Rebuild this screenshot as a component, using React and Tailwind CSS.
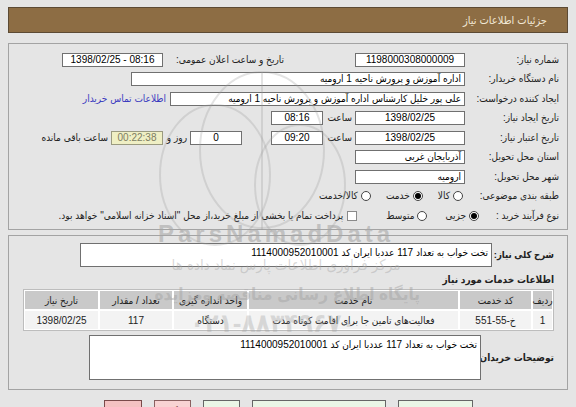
import React from "react";

const FONT = "font-['Liberation_Sans','DejaVu_Sans_Condensed','DejaVu_Sans',sans-serif]";

function Field({ className = "", right = false, ltr = false, children }) {
  return (
    <div
      dir={ltr ? "ltr" : undefined}
      className={`flex h-[14px] shrink-0 items-center overflow-hidden whitespace-nowrap border border-[#707070] bg-white px-[3px] text-[10px] leading-none text-black ${right ? "justify-start" : "justify-center"} ${className}`}
    >
      {children}
    </div>
  );
}

function Label({ className = "w-[92px]", children }) {
  return (
    <div className={`shrink-0 whitespace-nowrap text-[10px] leading-none text-[#222] ${className}`}>
      {children}
    </div>
  );
}

function Radio({ checked }) {
  return (
    <span className="flex h-[10px] w-[10px] shrink-0 items-center justify-center rounded-full border border-[#444] bg-white">
      {checked && <span className="h-[6px] w-[6px] rounded-full bg-black" />}
    </span>
  );
}

function Option({ checked, className = "", children }) {
  return (
    <div className={`flex items-center gap-[3px] ${className}`}>
      <Radio checked={checked} />
      <span className="whitespace-nowrap text-[10px] leading-none text-[#222]">{children}</span>
    </div>
  );
}

const columns = ["ردیف", "کد خدمت", "نام خدمت", "واحد اندازه گیری", "تعداد / مقدار", "تاریخ نیاز"];

export default function App() {
  return (
    <div
      dir="rtl"
      className={`relative h-[407px] w-[576px] overflow-hidden bg-[#e5e5e5] px-[8px] pt-[7px] ${FONT}`}
    >
      {/* header bar */}
      <div className="flex h-[26px] items-center border border-[#5c4a34] bg-[#8d6d44] pr-[20px] text-[11px] text-[#f1e8d6]">
        جزئیات اطلاعات نیاز
      </div>

      {/* main details */}
      <div className="mt-[10px] h-[187px] border border-[#a3a3a3] pr-[8px] pt-[6px]">
        <div className="flex h-[19.5px] items-center">
          <Label>شماره نیاز:</Label>
          <Field className="mr-[2px] w-[110px]">1198000308000009</Field>
          <Label className="mr-[71px] w-[121px]">تاریخ و ساعت اعلان عمومی:</Label>
          <Field ltr className="w-[101px]">1398/02/25 - 08:16</Field>
        </div>

        <div className="flex h-[19.5px] items-center">
          <Label>نام دستگاه خریدار:</Label>
          <Field right className="mr-[2px] w-[334px]">اداره آموزش و پرورش ناحیه 1 ارومیه</Field>
        </div>

        <div className="flex h-[19.5px] items-center">
          <Label>ایجاد کننده درخواست:</Label>
          <Field right className="mr-[2px] w-[295px]">علی پور خلیل کارشناس اداره آموزش و پرورش ناحیه 1 ارومیه</Field>
          <span className="mr-[4px] whitespace-nowrap text-[10px] leading-none text-[#3a3abf]">اطلاعات تماس خریدار</span>
        </div>

        <div className="flex h-[19.5px] items-center">
          <Label>تاریخ ایجاد نیاز:</Label>
          <Field className="mr-[2px] w-[110px]">1398/02/25</Field>
          <Label className="mr-[3px] w-[29px]">ساعت</Label>
          <Field className="w-[52px]">08:16</Field>
        </div>

        <div className="flex h-[19.5px] items-center">
          <Label>تاریخ اعتبار نیاز:</Label>
          <Field className="mr-[2px] w-[110px]">1398/02/25</Field>
          <Label className="mr-[3px] w-[29px]">ساعت</Label>
          <Field className="w-[52px]">09:20</Field>
          <Field className="mr-[29px] w-[52px]">0</Field>
          <Label className="w-[27px] pr-[3px]">روز و</Label>
          <div className="flex h-[14px] w-[52px] shrink-0 items-center justify-center border border-[#9a9a80] bg-[#efefc4] text-[10px] leading-none text-[#7d7d62]">
            00:22:38
          </div>
          <Label className="mr-[3px]">ساعت باقی مانده</Label>
        </div>

        <div className="flex h-[19.5px] items-center">
          <Label>استان محل تحویل:</Label>
          <Field right className="mr-[2px] w-[110px]">آذربایجان غربی</Field>
        </div>

        <div className="flex h-[19.5px] items-center">
          <Label>شهر محل تحویل:</Label>
          <Field right className="mr-[2px] w-[110px]">ارومیه</Field>
        </div>

        <div className="flex h-[19.5px] items-center">
          <Label>طبقه بندی موضوعی:</Label>
          <Option className="mr-[4px]">کالا</Option>
          <Option checked className="mr-[15px]">خدمت</Option>
          <Option className="mr-[15px]">کالا/خدمت</Option>
        </div>

        <div className="flex h-[19.5px] items-center">
          <Label className="w-[78px]">نوع فرآیند خرید :</Label>
          <Option checked className="mr-[2px]">جزیی</Option>
          <Option className="mr-[18px]">متوسط</Option>
          <span className="mr-[29px] h-[10px] w-[10px] shrink-0 border border-[#8a8a8a] bg-white" />
          <span className="mr-[4px] whitespace-nowrap text-[10px] leading-none text-[#222]">
            پرداخت تمام یا بخشی از مبلغ خرید،از محل "اسناد خزانه اسلامی" خواهد بود.
          </span>
        </div>
      </div>

      {/* description + items */}
      <div className="mt-[5px] h-[155px] border border-[#a3a3a3] px-[13px] pt-[7px]">
        <div className="flex items-center">
          <div className="w-[62px] shrink-0 whitespace-nowrap text-[9.5px] font-bold text-[#222]">شرح کلی نیاز:</div>
          <div className="h-[24px] w-[412px] shrink-0 border border-[#707070] bg-white px-[3px] pt-[2px] text-[10px] leading-[13px] text-black">
            تخت خواب به تعداد 117 عددبا ایران کد 1114000952010001
          </div>
        </div>

        <div className="mt-[6px] h-[14px] text-[10px] font-bold leading-[14px] text-[#222]">اطلاعات خدمات مورد نیاز</div>

        <div className="mt-[2px] grid w-[531px] grid-cols-[19px_71px_209px_73px_72px_73px] gap-[2px] border border-[#bdbdbd] bg-white p-[1px] text-[10px] text-[#222]">
          {columns.map((c) => (
            <div key={c} className="flex h-[18px] items-center justify-center whitespace-nowrap bg-[#c9c9c9]">
              {c}
            </div>
          ))}
          <div className="flex h-[18px] items-center justify-center bg-[#f3f3f3]">1</div>
          <div className="flex h-[18px] items-center justify-center bg-[#f3f3f3]">
            <span dir="ltr">خ-55-551</span>
          </div>
          <div className="flex h-[18px] items-center justify-center whitespace-nowrap bg-[#f3f3f3]">فعالیت‌های تامین جا برای اقامت کوتاه مدت</div>
          <div className="flex h-[18px] items-center justify-center bg-[#f3f3f3]">دستگاه</div>
          <div className="flex h-[18px] items-center justify-center bg-[#f3f3f3]">117</div>
          <div className="flex h-[18px] items-center justify-center bg-[#f3f3f3]">1398/02/25</div>
        </div>

        <div className="mt-[4px] flex items-center">
          <div className="w-[73px] shrink-0 whitespace-nowrap text-[10px] font-bold text-[#222]">توضیحات خریدان:</div>
          <div className="h-[45px] w-[392px] shrink-0 border border-[#707070] bg-white px-[3px] pt-[2px] text-[10px] leading-[13px] text-black">
            تخت خواب به تعداد 117 عددبا ایران کد 1114000952010001
          </div>
        </div>
      </div>

      {/* action buttons */}
      <div className="mt-[10px] flex justify-center gap-[12px] text-[10px]">
        <div className="flex h-[22px] w-[75px] items-center justify-center border border-[#666] bg-[#eaf6e6] text-[#222]">اطلاعات تکمیلی</div>
        <div className="flex h-[22px] w-[134px] items-center justify-center border border-[#666] bg-[#eaf6e6] text-[#222]">مشاهده اسناد پیوستی (0)</div>
        <div className="flex h-[22px] w-[37px] items-center justify-center border border-[#666] bg-[#eaf6e6] text-[#222]">چاپ</div>
        <div className="flex h-[22px] w-[37px] items-center justify-center border border-[#8a6060] bg-[#f8d3d3] text-[#6b2a2a]">بازگشت</div>
        <div className="flex h-[22px] w-[38px] items-center justify-center border border-[#7a4a4a] bg-[#f4c2c2] text-[#6b2a2a]">بستن</div>
      </div>

      {/* watermark */}
      <svg className="pointer-events-none absolute left-0 top-0" width="576" height="407" viewBox="0 0 576 407">
        <g fill="none" stroke="#9a9a9a" strokeOpacity="0.28" strokeWidth="2">
          <ellipse cx="262" cy="150" rx="62" ry="78" />
          <ellipse cx="215" cy="175" rx="55" ry="70" />
          <ellipse cx="300" cy="185" rx="45" ry="60" />
          <path d="M262 72 L262 230" />
        </g>
      </svg>
      <div
        dir="ltr"
        className="pointer-events-none absolute left-[158px] top-[216px] whitespace-nowrap text-[24px] font-bold tracking-[4px] text-[#a8a8a8]/60"
      >
        ParsNamadData
      </div>
      <div className="pointer-events-none absolute left-[150px] top-[254px] w-[272px] whitespace-nowrap text-center text-[15px] text-[#a8a8a8]/45">
        مرکز فراوری اطلاعات پارس نماد داده ها
      </div>
      <div className="pointer-events-none absolute left-[158px] top-[282px] w-[262px] whitespace-nowrap text-center text-[17px] font-bold text-[#a0a0a0]/45">
        پایگاه اطلاع رسانی مناقصه ومزایده
      </div>
      <div
        dir="ltr"
        className="pointer-events-none absolute left-[190px] top-[304px] whitespace-nowrap text-[26px] font-bold text-[#a0a0a0]/35"
      >
        ۰۲۱-۸۸۳۴۹۶۷۰
      </div>
    </div>
  );
}
